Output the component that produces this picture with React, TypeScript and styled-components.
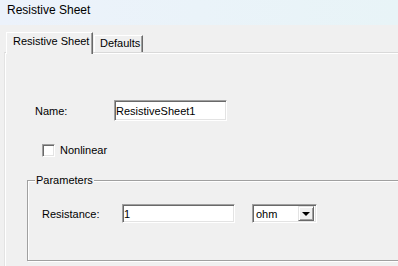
import React from "react";
import styled, { createGlobalStyle } from "styled-components";

const Global = createGlobalStyle`
  html, body { margin: 0; padding: 0; background: #f0f0f0; }
  body {
    font-family: "Liberation Sans", Arial, sans-serif;
    font-size: 11px;
    color: #000;
    overflow: hidden;
  }
`;

const Window = styled.div`
  width: 398px;
  height: 266px;
  overflow: hidden;
  background: #f0f0f0;
`;

const TitleBar = styled.div`
  height: 25px;
  box-sizing: border-box;
  padding: 3px 0 0 7px;
  font-size: 12px;
  line-height: 14px;
  background: linear-gradient(to right, #ecf2fb, #e8f4f7);
`;

const TabStrip = styled.div`
  display: flex;
  align-items: flex-end;
  height: 20px;
  margin: 7px 0 0 4px;
  padding-left: 2px;
  position: relative;
  z-index: 1;
`;

const Tab = styled.div<{ $active?: boolean }>`
  box-sizing: border-box;
  height: ${(p) => (p.$active ? 22 : 17)}px;
  margin-bottom: ${(p) => (p.$active ? -2 : 0)}px;
  margin-left: ${(p) => (p.$active ? 0 : 1)}px;
  width: ${(p) => (p.$active ? 87 : 49)}px;
  padding: ${(p) => (p.$active ? "2px 0 0 6px" : "1px 0 0 5px")};
  line-height: 13px;
  white-space: nowrap;
  background: #f0f0f0;
  border-left: 1px solid #fff;
  border-top: 1px solid #fff;
  border-right: 1px solid #696969;
  box-shadow: inset -1px 0 0 #a0a0a0;
`;

const Panel = styled.div`
  margin-left: 4px;
  height: 300px;
  border-top: 1px solid #d9d9d9;
  border-left: 1px solid #e3e3e3;
  box-shadow: inset 1px 1px 0 #fff;
  display: flex;
  flex-direction: column;
  align-items: flex-start;
`;

const FieldRow = styled.div<{ $top: number; $left: number; $labelWidth: number }>`
  display: flex;
  align-items: center;
  margin: ${(p) => p.$top}px 0 0 ${(p) => p.$left}px;
  & > label {
    width: ${(p) => p.$labelWidth}px;
    flex: none;
  }
`;

const TextBox = styled.input<{ $w: number; $h: number }>`
  box-sizing: border-box;
  width: ${(p) => p.$w}px;
  height: ${(p) => p.$h}px;
  margin: 0;
  padding: 0 0 0 1px;
  font-family: "Liberation Sans", Arial, sans-serif;
  font-size: 11px;
  color: #000;
  background: #fff;
  border-style: solid;
  border-width: 1px;
  border-color: #a0a0a0 #fff #fff #a0a0a0;
  box-shadow: inset 1px 1px 0 #696969, inset -1px -1px 0 #e3e3e3;
  outline: none;
`;

const CheckRow = styled.label`
  display: flex;
  align-items: center;
  gap: 5px;
  margin: 23px 0 0 37px;
  line-height: 13px;
`;

const CheckBox = styled.span`
  box-sizing: border-box;
  width: 13px;
  height: 13px;
  background: #fff;
  border-style: solid;
  border-width: 1px;
  border-color: #a0a0a0 #fff #fff #a0a0a0;
  box-shadow: inset 1px 1px 0 #696969, inset -1px -1px 0 #e3e3e3;
`;

const GroupBox = styled.div`
  position: relative;
  box-sizing: border-box;
  margin: 23px 0 0 22px;
  width: 420px;
  height: 81px;
  border: 1px solid #a0a0a0;
  box-shadow: inset 1px 1px 0 #fff, 1px 1px 0 #fff;
  display: flex;
  flex-direction: column;
`;

const Legend = styled.span`
  position: absolute;
  top: -7px;
  left: 7px;
  padding: 0 1px;
  line-height: 13px;
  background: #f0f0f0;
`;

const Combo = styled.div`
  box-sizing: border-box;
  width: 65px;
  height: 19px;
  margin-left: 17px;
  display: flex;
  align-items: center;
  justify-content: space-between;
  padding: 0 2px 0 3px;
  background: #fff;
  border-style: solid;
  border-width: 1px;
  border-color: #a0a0a0 #fff #fff #a0a0a0;
  box-shadow: inset 1px 1px 0 #696969, inset -1px -1px 0 #e3e3e3;
`;

const DropButton = styled.div`
  box-sizing: border-box;
  width: 16px;
  height: 15px;
  display: flex;
  align-items: center;
  justify-content: center;
  background: #f0f0f0;
  border-style: solid;
  border-width: 1px;
  border-color: #e3e3e3 #696969 #696969 #e3e3e3;
  box-shadow: inset 1px 1px 0 #fff, inset -1px -1px 0 #a0a0a0;
`;

const Arrow = styled.span`
  width: 0;
  height: 0;
  border-left: 4px solid transparent;
  border-right: 4px solid transparent;
  border-top: 4px solid #000;
`;

export default function App() {
  return (
    <Window>
      <Global />
      <TitleBar>Resistive Sheet</TitleBar>
      <TabStrip>
        <Tab $active>Resistive Sheet</Tab>
        <Tab>Defaults</Tab>
      </TabStrip>
      <Panel>
        <FieldRow $top={47} $left={30} $labelWidth={79}>
          <label>Name:</label>
          <TextBox $w={113} $h={21} readOnly defaultValue="ResistiveSheet1" />
        </FieldRow>
        <CheckRow>
          <CheckBox />
          <span>Nonlinear</span>
        </CheckRow>
        <GroupBox>
          <Legend>Parameters</Legend>
          <FieldRow $top={23} $left={14} $labelWidth={80}>
            <label>Resistance:</label>
            <TextBox $w={113} $h={19} readOnly defaultValue="1" />
            <Combo>
              <span>ohm</span>
              <DropButton>
                <Arrow />
              </DropButton>
            </Combo>
          </FieldRow>
        </GroupBox>
      </Panel>
    </Window>
  );
}
